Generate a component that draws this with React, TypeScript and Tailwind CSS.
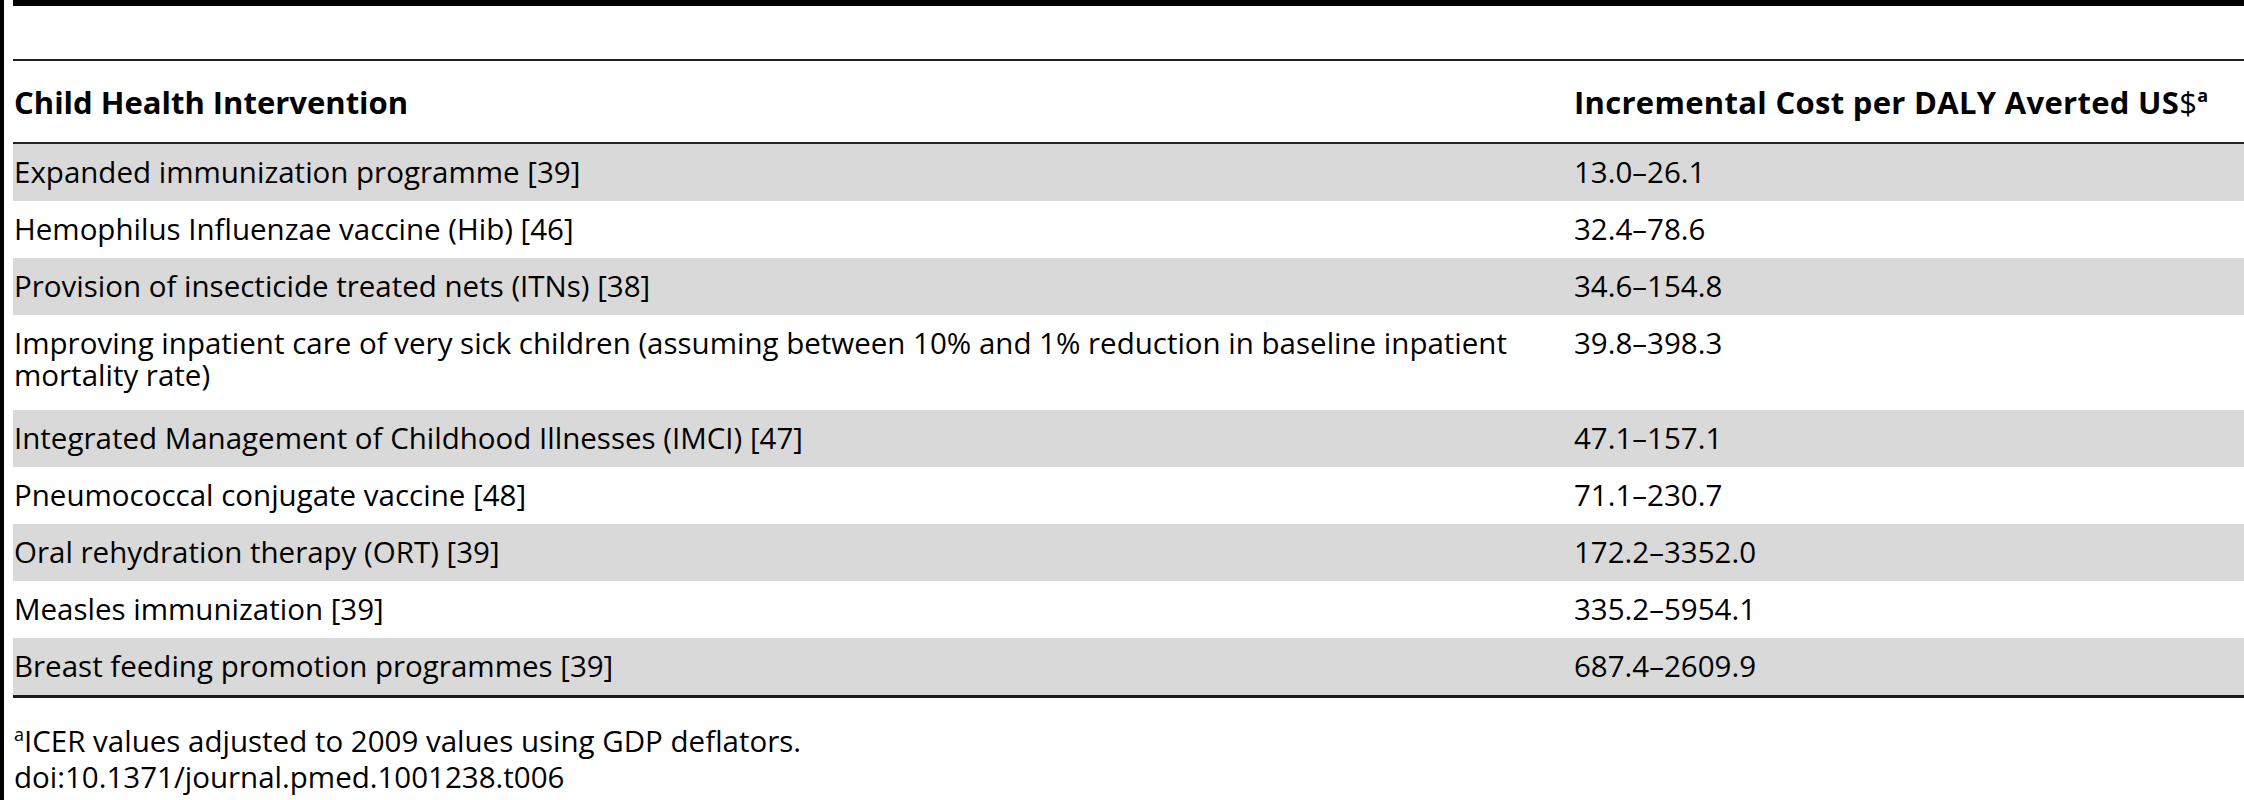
const rows: { name: string; value: string; tall?: boolean }[] = [
  { name: "Expanded immunization programme [39]", value: "13.0–26.1" },
  { name: "Hemophilus Influenzae vaccine (Hib) [46]", value: "32.4–78.6" },
  { name: "Provision of insecticide treated nets (ITNs) [38]", value: "34.6–154.8" },
  {
    name: "Improving inpatient care of very sick children (assuming between 10% and 1% reduction in baseline inpatient mortality rate)",
    value: "39.8–398.3",
    tall: true,
  },
  { name: "Integrated Management of Childhood Illnesses (IMCI) [47]", value: "47.1–157.1" },
  { name: "Pneumococcal conjugate vaccine [48]", value: "71.1–230.7" },
  { name: "Oral rehydration therapy (ORT) [39]", value: "172.2–3352.0" },
  { name: "Measles immunization [39]", value: "335.2–5954.1" },
  { name: "Breast feeding promotion programmes [39]", value: "687.4–2609.9" },
];

export default function App() {
  return (
    <div className="flex h-[800px] w-[2244px] bg-white font-['Open_Sans',sans-serif] text-[29.5px] leading-[32px] text-black">
      <div className="w-[4px] shrink-0 bg-black" />
      <div className="ml-[9px] flex flex-1 flex-col">
        <div className="h-[6px] bg-black" />
        <div className="h-[53px]" />
        <div className="h-[2px] bg-[#222]" />
        <div className="grid h-[81px] grid-cols-[1561px_1fr] pt-[25px] text-[31px] font-bold">
          <div className="px-[1px]">Child Health Intervention</div>
          <div className="tracking-[0.3px]">
            Incremental Cost per DALY Averted US
            <span className="font-normal">$</span>
            <span className="relative -top-[12px] text-[18px] leading-none">a</span>
          </div>
        </div>
        <div className="h-[2px] bg-[#222]" />
        {rows.map((row, i) => (
          <div
            key={row.name}
            className={`grid grid-cols-[1561px_1fr] pt-[12px] ${row.tall ? "h-[95px]" : "h-[57px]"} ${
              i % 2 === 0 ? "bg-[#d9d9d9]" : "bg-white"
            }`}
          >
            <div className="px-[1px] pr-[30px]">{row.name}</div>
            <div>{row.value}</div>
          </div>
        ))}
        <div className="h-[3px] bg-[#1a1a1a]" />
        <div className="mt-[25px] px-[1px] leading-[36px]">
          <div>
            <span className="relative -top-[11px] text-[18px] leading-none">a</span>ICER values adjusted to 2009 values using GDP deflators.
          </div>
          <div>doi:10.1371/journal.pmed.1001238.t006</div>
        </div>
      </div>
    </div>
  );
}
